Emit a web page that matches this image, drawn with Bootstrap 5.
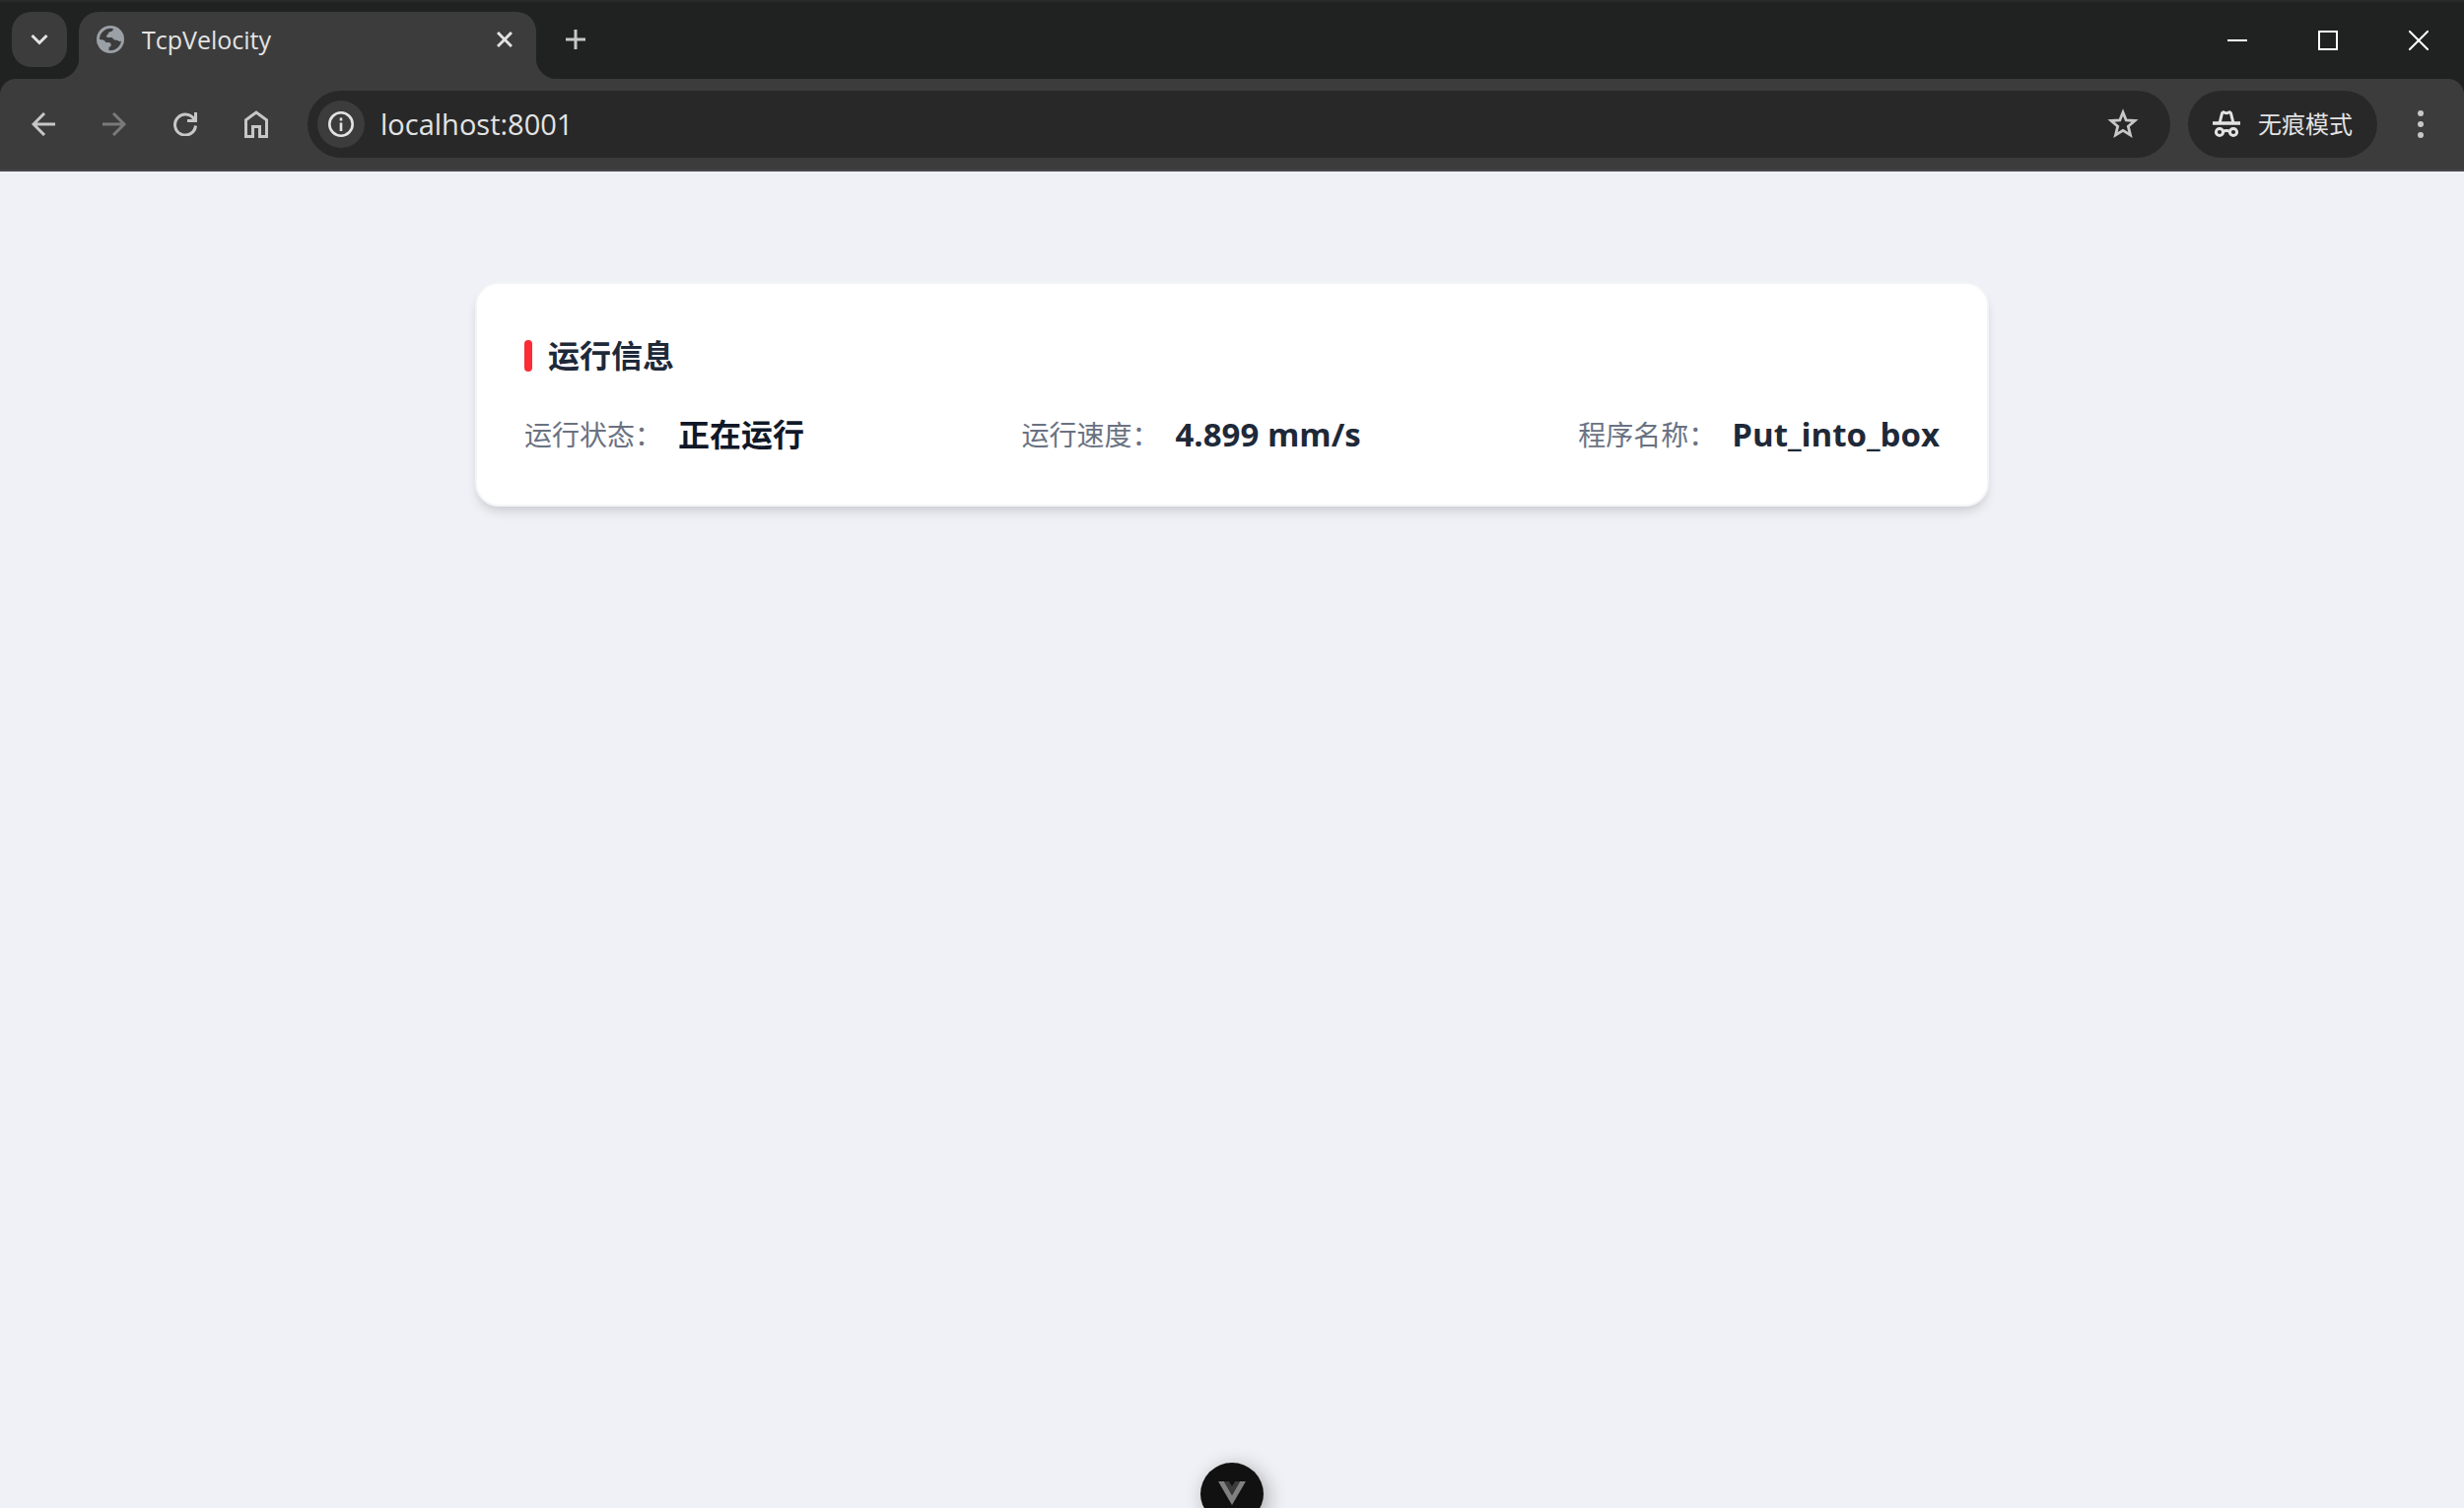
<!DOCTYPE html>
<html lang="zh-CN">
<head>
<meta charset="utf-8">
<meta name="viewport" content="width=device-width, initial-scale=1">
<title>TcpVelocity</title>
<link href="https://cdn.jsdelivr.net/npm/bootstrap@5.3.0/dist/css/bootstrap.min.css" rel="stylesheet">
<style>
  body { background: #f0f1f6; font-family: "Open Sans", "Noto Sans CJK SC", sans-serif; }
  svg { display: block; flex: none; }
  button { flex: none; }

  /* tab strip */
  .tab-strip { height: 80px; background: #202221; border-top: 2px solid #272928; padding: 10px 0 0 12px; }
  .tab-search { width: 56px; height: 56px; border-radius: 20px; background: #3c3c3c; }
  .browser-tab { position: relative; width: 464px; height: 68px; gap: 18px; margin-left: 12px; padding: 0 24px 12px 18px; border-radius: 20px 20px 0 0; background: #3c3c3c; color: #e3e3e3; font-size: 25px; line-height: 36px; }
  .browser-tab::before, .browser-tab::after { content: ""; position: absolute; bottom: 0; width: 22px; height: 22px; }
  .browser-tab::before { right: 100%; background: radial-gradient(circle at 0 0, transparent 22px, #3c3c3c 23px); }
  .browser-tab::after { left: 100%; background: radial-gradient(circle at 100% 0, transparent 22px, #3c3c3c 23px); }
  .new-tab { width: 56px; height: 56px; margin-left: 12px; }
  .win-btn { width: 92px; height: 58px; }

  /* toolbar */
  .tool-wrap { background: #202221; }
  .toolbar { height: 94px; padding: 0 16px 0 8px; border-radius: 16px 16px 0 0; border-bottom: 2px solid #47464a; background: #3c3c3c; }
  .nav-btn { width: 72px; height: 68px; }
  .menu-btn { width: 56px; height: 68px; }
  .omnibox { height: 68px; margin-left: 16px; padding: 0 32px 0 10px; border-radius: 34px; background: #282828; }
  .site-info { width: 48px; height: 48px; border-radius: 24px; background: #3c3c3c; }
  .omnibox input { min-width: 0; margin-left: 16px; padding: 0; border: 0; outline: 0; background: transparent; color: #e3e3e3; font-size: 29px; line-height: 40px; }
  .mode-chip { width: 192px; height: 68px; gap: 18px; margin: 0 16px 0 18px; border-radius: 34px; background: #282828; color: #e3e3e3; font-size: 24px; line-height: 36px; }

  /* page */
  .page-main { padding: 112px 24px; }
  .info-card { max-width: 1536px; padding: 48px 48px 46px; border: 2px solid #f3f4f6; border-radius: 24px; background: #fff; box-shadow: 0 8px 12px -2px rgba(0,0,0,.1), 0 4px 8px -4px rgba(0,0,0,.1); }
  .info-title { gap: 16px; margin: 0 0 30px; color: #1e2939; font-size: 32px; line-height: 50px; font-weight: 700; }
  .info-title::before { content: ""; width: 8px; height: 32px; border-radius: 4px; background: #fb2c36; }
  .info-list { gap: 16px; line-height: 50px; }
  .info-list dt { color: #6a7282; font-size: 28px; font-weight: 400; }
  .info-list dd { color: #1e2939; font-size: 33px; font-weight: 700; }
  .info-list dd.state { color: #101828; font-size: 32px; }

  /* devtools launcher, tucked into the window's lower edge */
  .dev-pill { position: fixed; left: 50%; bottom: -14px; width: 64px; height: 60px; margin-left: -32px; padding: 19px 0 0; border-radius: 32px 32px 28px 28px; background: #111; box-shadow: 4px 4px 20px rgba(0,0,0,.3); }
</style>
</head>
<body>
<header>
  <div class="tab-strip d-flex align-items-start">
    <button class="tab-search btn p-0 border-0 d-flex align-items-center justify-content-center" aria-label="搜索标签页">
      <svg width="18" height="12" viewBox="0 0 18 12" fill="none" stroke="#e3e3e3" stroke-width="3"><path d="M1.500 2L9 9.500 16.500 2"/></svg>
    </button>
    <div class="browser-tab d-flex align-items-center">
      <svg width="28" height="28" viewBox="0 0 28 28"><circle cx="14" cy="14" r="14" fill="#9aa0a6"/><path fill="#3c3c3c" d="M17 3.200C16.500 5.500 15.500 6 13.500 6.200C11.800 6.500 12 8.600 11 9.300C9.800 10 9.600 11.300 11 12H14.500C17 12 16.800 14.200 18.300 14.500C20 14.900 21.500 14.600 22.200 15.500C23.300 16.800 24.200 15.500 25 15.800A11.200 11.200 0 0 1 12.500 25.100V22C14.600 21.500 15 20 14.500 18.500C13.800 17 11.500 17 9.500 17.200C8.500 15 6.500 14 2.900 14A11.200 11.200 0 0 1 17 3.200Z"/></svg>
      <span class="flex-grow-1">TcpVelocity</span>
      <button class="btn p-0 border-0" aria-label="关闭标签页">
        <svg width="16" height="16" viewBox="0 0 16 16" stroke="#e3e3e3" stroke-width="3"><path d="M1 1L15 15M15 1L1 15"/></svg>
      </button>
    </div>
    <button class="new-tab btn p-0 border-0 d-flex align-items-center justify-content-center" aria-label="新标签页">
      <svg width="20" height="20" viewBox="0 0 20 20" stroke="#c7c7c7" stroke-width="3"><path d="M10 0V20M0 10H20"/></svg>
    </button>
    <div class="ms-auto d-flex">
      <button class="win-btn btn p-0 border-0 d-flex align-items-center justify-content-center" aria-label="最小化"><svg width="20" height="20" viewBox="0 0 20 20" stroke="#fff" stroke-width="2"><path d="M0 10H20"/></svg></button>
      <button class="win-btn btn p-0 border-0 d-flex align-items-center justify-content-center" aria-label="最大化"><svg width="20" height="20" viewBox="0 0 20 20" fill="none" stroke="#fff" stroke-width="2"><path d="M1 1H19V19H1Z"/></svg></button>
      <button class="win-btn btn p-0 border-0 d-flex align-items-center justify-content-center" aria-label="关闭"><svg width="20" height="20" viewBox="0 0 20 20" stroke="#fff" stroke-width="2"><path d="M0 0L20 20M20 0L0 20"/></svg></button>
    </div>
  </div>
  <div class="tool-wrap">
    <div class="toolbar d-flex align-items-center">
      <button class="nav-btn btn p-0 border-0 d-flex align-items-center justify-content-center" aria-label="后退"><svg width="24" height="24" viewBox="0 0 24 24" fill="none" stroke="#c7c7c7" stroke-width="3"><path d="M24 12H2M13 1L2 12L13 23"/></svg></button>
      <button class="nav-btn btn p-0 border-0 d-flex align-items-center justify-content-center" aria-label="前进"><svg width="24" height="24" viewBox="0 0 24 24" fill="none" stroke="#7a7a7a" stroke-width="3"><path d="M0 12H22M11 1L22 12L11 23"/></svg></button>
      <button class="nav-btn btn p-0 border-0 d-flex align-items-center justify-content-center" aria-label="重新加载"><svg width="24" height="24" viewBox="0 0 24 24" fill="none" stroke="#c7c7c7" stroke-width="3"><path d="M22.500 0V8.500H14"/><path d="M21.500 8A10.500 10.500 0 1 0 22.500 13.500"/></svg></button>
      <button class="nav-btn btn p-0 border-0 d-flex align-items-center justify-content-center" aria-label="主页"><svg width="24" height="28" viewBox="0 0 24 28" fill="none" stroke="#c7c7c7" stroke-width="3"><path d="M1.500 26.500V9.700L12 2L22.500 9.700V26.500H15.500V16.500H8.500V26.500Z"/></svg></button>
      <form class="omnibox flex-grow-1 d-flex align-items-center">
        <button type="button" class="site-info btn p-0 border-0 d-flex align-items-center justify-content-center" aria-label="网站信息"><svg width="26" height="26" viewBox="0 0 26 26" fill="none" stroke="#e3e3e3" stroke-width="2.600"><circle cx="13" cy="13" r="11.700"/><path d="M13 11.500V20M13 6.500V9.500"/></svg></button>
        <input class="flex-grow-1" type="text" value="localhost:8001" aria-label="地址栏">
        <button type="button" class="btn p-0 border-0" aria-label="收藏"><svg width="32" height="32" viewBox="0 0 32 32" fill="none" stroke="#c7c7c7" stroke-width="2.800"><path d="M16 4L19.200 12L28 12.500L21.300 18.200L23.500 27L16 22.300L8.500 27L10.700 18.200L4 12.500L12.800 12Z"/></svg></button>
      </form>
      <button class="mode-chip btn p-0 border-0 d-flex align-items-center justify-content-center">
        <svg width="28" height="28" viewBox="0 0 28 28" fill="none" stroke="#e3e3e3" stroke-width="3"><path stroke-width="3.500" d="M0 13H28"/><path d="M7 13L9.500 3Q10 1.500 11.500 2Q14 3.500 16.500 2Q18 1.500 18.500 3L21 13"/><circle cx="7" cy="22" r="3.600"/><circle cx="21" cy="22" r="3.600"/><path d="M10 21.500Q14 19.500 18 21.500"/></svg>
        <span>无痕模式</span>
      </button>
      <button class="menu-btn btn p-0 border-0 d-flex align-items-center justify-content-center" aria-label="菜单"><svg width="6" height="28" viewBox="0 0 6 28" fill="#c7c7c7"><circle cx="3" cy="3" r="3"/><circle cx="3" cy="14" r="3"/><circle cx="3" cy="25" r="3"/></svg></button>
    </div>
  </div>
</header>

<main class="page-main">
  <section class="info-card mx-auto">
    <h1 class="info-title d-flex align-items-center">运行信息</h1>
    <dl class="info-list d-flex flex-wrap justify-content-between mb-0">
      <div class="d-flex gap-3"><dt>运行状态：</dt><dd class="state mb-0">正在运行</dd></div>
      <div class="d-flex gap-3"><dt>运行速度：</dt><dd class="mb-0">4.899 mm/s</dd></div>
      <div class="d-flex gap-3"><dt>程序名称：</dt><dd class="mb-0">Put_into_box</dd></div>
    </dl>
  </section>
</main>

<button class="dev-pill btn border-0 d-flex align-items-start justify-content-center" aria-label="Vue DevTools">
  <svg width="28" height="24" viewBox="0 0 28 24"><path fill="#808080" d="M0 0H6L14 14L22 0H28L14 24Z"/><path fill="#3c3c3c" d="M6 0H11L14 5L17 0H22L14 14Z"/></svg>
</button>
<script src="https://cdn.jsdelivr.net/npm/bootstrap@5.3.0/dist/js/bootstrap.bundle.min.js"></script>
</body>
</html>
